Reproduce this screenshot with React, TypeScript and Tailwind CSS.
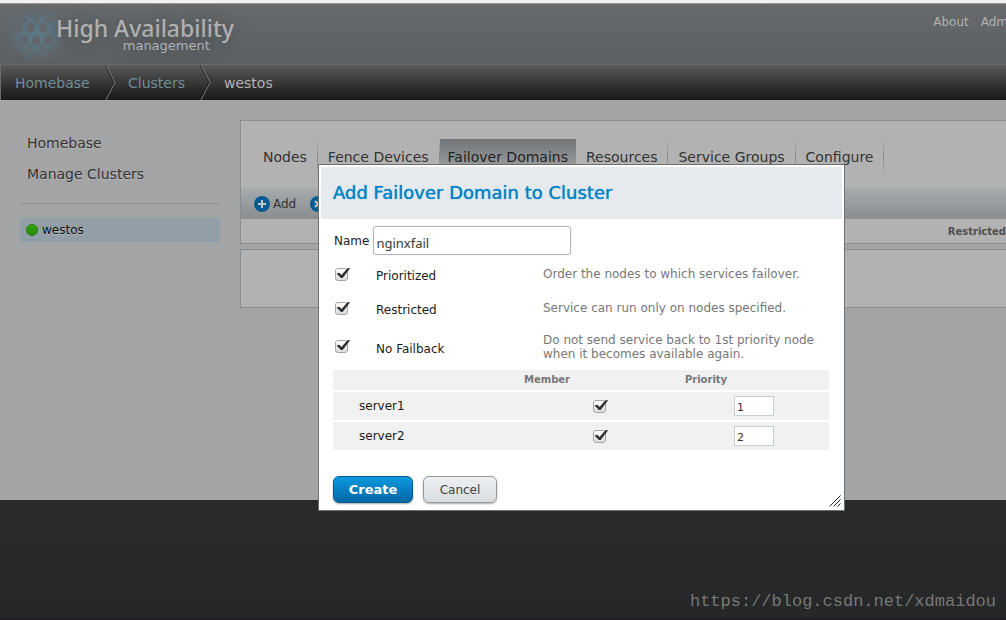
import { useState } from 'react';

interface Tab {
  label: string;
  active?: boolean;
}

interface Option {
  id: string;
  label: string;
  hint: string;
  rowClass: string;
}

interface Member {
  name: string;
  priority: string;
}

const tabs: Tab[] = [
  { label: 'Nodes' },
  { label: 'Fence Devices' },
  { label: 'Failover Domains', active: true },
  { label: 'Resources' },
  { label: 'Service Groups' },
  { label: 'Configure' },
];

const options: Option[] = [
  { id: 'prioritized', label: 'Prioritized', hint: 'Order the nodes to which services failover.', rowClass: 'h-[34px]' },
  { id: 'restricted', label: 'Restricted', hint: 'Service can run only on nodes specified.', rowClass: 'h-[34px]' },
  {
    id: 'no-failback',
    label: 'No Failback',
    hint: 'Do not send service back to 1st priority node when it becomes available again.',
    rowClass: 'h-[43px]',
  },
];

const members: Member[] = [
  { name: 'server1', priority: '1' },
  { name: 'server2', priority: '2' },
];

// rows of the drop pattern in the logo: [cx, cy, radius]
const drops: [number, number, number][] = [
  [37, 8, 1], [31, 11, 1.6], [43, 11, 1.6],
  [25, 15, 2.6], [37, 15, 2.6], [49, 15, 2.6],
  [19, 23, 4.4], [31, 23, 4.4], [43, 23, 4.4],
  [24.5, 37, 4.4], [36.5, 37, 4.4], [48.5, 37, 4.4],
  [30.5, 45, 2.6], [42.5, 45, 2.6], [54.5, 45, 2.6],
  [36.5, 49, 1.4], [48.5, 49, 1.4], [43, 52, 1],
];

const Logo: React.FC = () => (
  <svg width="80" height="60" viewBox="0 0 80 60" aria-hidden="true">
    <defs>
      <radialGradient id="glow">
        <stop offset="0" stopColor="#5c7988" />
        <stop offset="0.5" stopColor="#5c7583" stopOpacity="0.85" />
        <stop offset="1" stopColor="#62666a" stopOpacity="0" />
      </radialGradient>
    </defs>
    <ellipse cx="37" cy="30" rx="33" ry="31" fill="url(#glow)" />
    {drops.map(([x, y, r]) => (
      <path
        key={`${x}-${y}`}
        fill="#61676b"
        d={
          y < 30
            ? `M${x - r} ${y}a${r} ${r} 0 0 1 ${2 * r} 0q0 ${r * 0.8} ${-r} ${r * 1.4}q${-r} ${-r * 0.6} ${-r} ${-r * 1.4}`
            : `M${x - r} ${y}a${r} ${r} 0 0 0 ${2 * r} 0q0 ${-r * 0.8} ${-r} ${-r * 1.4}q${-r} ${r * 0.6} ${-r} ${r * 1.4}`
        }
      />
    ))}
  </svg>
);

const Chevron: React.FC = () => (
  <svg width="12" height="35" viewBox="0 0 12 35" fill="none" aria-hidden="true">
    <path d="M0 0L9 17.5L0 35" stroke="#1c1c1c" />
    <path d="M1 0L10 17.5L1 35" stroke="#7a7a7a" />
  </svg>
);

const Check: React.FC<React.InputHTMLAttributes<HTMLInputElement>> = (props) => (
  <span className="relative block h-[13px] w-[13px]">
    <input
      type="checkbox"
      className="peer block h-[13px] w-[13px] appearance-none rounded-[3px] border border-[#a3a5a6] bg-linear-to-b from-white to-[#dcdcdc]"
      {...props}
    />
    <svg
      className="pointer-events-none absolute top-0 left-0 hidden peer-checked:block"
      width="16"
      height="13"
      viewBox="0 0 16 13"
      aria-hidden="true"
    >
      <path d="M1.5 5.6L4.2 4.8L6.6 7L12.4 0.3H15.2L7.6 10H6Z" fill="#2a3033" />
    </svg>
  </span>
);

const FailoverDialog: React.FC = () => {
  const [name, setName] = useState('nginxfail');

  return (
    <div
      role="dialog"
      aria-labelledby="dialog-title"
      className="absolute top-[164px] left-[318px] w-[527px] border border-[#6f7072] bg-white p-0.5 text-xs text-[#1c1c1c]"
    >
      <h2
        id="dialog-title"
        className="h-[52px] bg-[#e6eaee] px-3 pt-3 text-lg leading-7 font-medium text-[#0582c4] [text-shadow:0_0_1px_#0582c4]"
      >
        Add Failover Domain to Cluster
      </h2>
      <form className="px-3 pt-[7px] pb-[5px]" onSubmit={(e) => e.preventDefault()}>
        <div className="mb-0.5 flex items-center gap-1 pl-px">
          <label htmlFor="domain-name">Name</label>
          <input
            id="domain-name"
            type="text"
            value={name}
            onChange={(e) => setName(e.target.value)}
            className="h-[29px] w-[198px] rounded-[3px] border border-[#b5b5b5] px-0.5 pt-1 font-['Noto_Sans'] text-[13px] text-[#333b3e] shadow-[0_0_1px_#bbb]"
          />
        </div>

        {options.map((option) => (
          <div key={option.id} className={`grid grid-cols-[41px_167px_1fr] items-center pl-0.5 ${option.rowClass}`}>
            <Check id={option.id} defaultChecked />
            <label htmlFor={option.id} className="pt-1">{option.label}</label>
            <p className="leading-[14px] text-[#777]">{option.hint}</p>
          </div>
        ))}

        <table className="w-[496px] table-fixed border-separate border-spacing-x-0 border-spacing-y-0.5">
          <thead>
            <tr className="h-5 bg-[#f1f1f1] text-[10px] text-[#777]">
              <td className="w-[160px]" />
              <th className="w-[108px] font-bold">Member</th>
              <th className="w-[210px] font-bold">Priority</th>
              <td />
            </tr>
          </thead>
          <tbody>
            {members.map((member) => (
              <tr key={member.name} className="h-7 bg-[#f1f1f1]">
                <td className="pl-[26px]">{member.name}</td>
                <td className="pl-[100px]"><Check aria-label={`${member.name} member`} defaultChecked /></td>
                <td className="pl-[133px]">
                  <input
                    type="text"
                    aria-label={`${member.name} priority`}
                    defaultValue={member.priority}
                    className="block h-5 w-10 border border-[#c9ced2] bg-white px-0.5 pt-0.5 text-[11px] text-[#333]"
                  />
                </td>
                <td />
              </tr>
            ))}
          </tbody>
        </table>

        <div className="mt-6 flex gap-2.5">
          <button
            type="submit"
            className="h-[27px] w-20 rounded-md border border-[#045a92] bg-linear-to-b from-[#0d9ae0] to-[#0367a5] text-[13px] font-bold text-white shadow-[0_1px_2px_#aaa]"
          >
            Create
          </button>
          <button
            type="button"
            className="h-[27px] w-[74px] rounded-md border border-[#999] bg-linear-to-b from-[#eef1f3] to-[#d9dde0] text-xs text-[#444] shadow-[0_1px_2px_#aaa]"
          >
            Cancel
          </button>
        </div>
      </form>
      <svg className="absolute right-[3px] bottom-[3px]" width="12" height="12" viewBox="0 0 12 12" stroke="#222" aria-hidden="true">
        <path d="M0.5 11.5L11.5 0.5M4.5 11.5L11.5 4.5M8.5 11.5L11.5 8.5" />
      </svg>
    </div>
  );
};

const App: React.FC = () => {
  return (
    <div className="relative flex min-h-screen flex-col overflow-hidden bg-[#262728] font-['DejaVu_Sans',sans-serif]">
      <div className="h-[3px] bg-[#f2f1f0]" />
      <header className="flex h-[61px] justify-between border-t border-[#999] bg-linear-to-b from-[#666a6d] to-[#5b5f62] text-[#b1b1b1]">
        <div className="flex">
          <Logo />
          <div className="-ml-6 pt-2.5 text-right [text-shadow:0_0_12px_#4a4d50]">
            <h1 className="font-['Noto_Sans'] text-[23px] leading-7 font-medium whitespace-nowrap">High Availability</h1>
            <p className="pr-6 text-[13px] leading-2">management</p>
          </div>
        </div>
        <nav className="-mr-[13px] flex gap-3 pt-2.5 text-xs">
          <a href="#about">About</a>
          <a href="#admin">Admin</a>
        </nav>
      </header>

      <nav className="flex h-9 items-center border-t border-l border-[#6a6a6a] bg-linear-to-b from-[#5a5a5a] to-[#181818] text-sm text-[#b3b3b3]">
        <a href="#homebase" className="w-[104px] pl-3.5 text-[#6f8d9b]">Homebase</a>
        <Chevron />
        <a href="#clusters" className="w-[83px] pl-[11px] text-[#6f8d9b]">Clusters</a>
        <Chevron />
        <span className="pl-3">westos</span>
      </nav>

      <main className="flex h-[400px] gap-5 bg-[#a3a4a6] pt-5 pl-5 text-[#333]">
        <aside className="w-[200px] shrink-0 text-sm [text-shadow:0_1px_1px_#bbb]">
          <ul className="flex flex-col gap-[11px] border-b border-[#8c8e90] px-[7px] pt-[13px] pb-[19px]">
            <li><a href="#home">Homebase</a></li>
            <li><a href="#manage">Manage Clusters</a></li>
          </ul>
          <a
            href="#westos"
            className="mt-3.5 flex h-6 items-center gap-1 rounded-xs border border-[#8aa0ad] bg-[#929fa7] pl-[5px] text-xs text-[#111]"
          >
            <span className="h-3 w-3 rounded-full border border-[#238011] bg-linear-to-b from-[#32a810] to-[#248607]" />
            westos
          </a>
        </aside>

        <div className="flex min-w-0 flex-1 flex-col gap-[5px]">
          <section className="h-[124px] border border-r-0 border-[#8b8e91] bg-[#b2b2b2]">
            <div className="flex h-[67px] pt-[18px] pl-3 text-sm">
              {tabs.map((tab) => (
                <a
                  key={tab.label}
                  href="#tab"
                  className={
                    tab.active
                      ? 'h-9 bg-linear-to-b from-[#727578] to-[#a5a7a9] px-2 pt-2 whitespace-nowrap text-[#222]'
                      : 'h-9 border-r border-[#8d8d8d] px-2.5 pt-2 whitespace-nowrap [border-image:linear-gradient(#b2b2b2,#888,#b2b2b2)_1]'
                  }
                >
                  {tab.label}
                </a>
              ))}
            </div>
            <div className="flex h-[31px] items-center gap-3.5 bg-linear-to-b from-[#a6abaf] to-[#8b8e90] pl-[13px] text-xs">
              <button type="button" className="flex items-center gap-[3px]">
                <svg width="16" height="16" viewBox="0 0 16 16" aria-hidden="true">
                  <circle cx="8" cy="8" r="8" fill="#045c93" />
                  <path d="M4 8H12M8 4V12" stroke="#c4c9cc" strokeWidth="2" />
                </svg>
                Add
              </button>
              <button type="button" aria-label="Remove">
                <svg width="16" height="16" viewBox="0 0 16 16" aria-hidden="true">
                  <circle cx="8" cy="8" r="8" fill="#045c93" />
                  <path d="M5 5L11 11M11 5L5 11" stroke="#c4c9cc" strokeWidth="2" />
                </svg>
              </button>
            </div>
            <div className="flex h-6 items-center justify-end text-[10px] font-bold text-[#505050]">
              <span>Restricted</span>
            </div>
          </section>
          <section className="h-[59px] border border-r-0 border-[#8b8e91] bg-[#b2b2b2]" />
        </div>
      </main>

      <footer className="flex flex-1 items-end justify-end border-b-2 border-[#231c26] bg-linear-to-b from-[#292b2c] to-[#262728] pr-2.5 pb-1">
        <a href="https://blog.csdn.net/xdmaidou" className="font-['Liberation_Mono',monospace] text-[17px] text-[#777874]">
          https://blog.csdn.net/xdmaidou
        </a>
      </footer>

      <FailoverDialog />
    </div>
  );
};

export default App;
